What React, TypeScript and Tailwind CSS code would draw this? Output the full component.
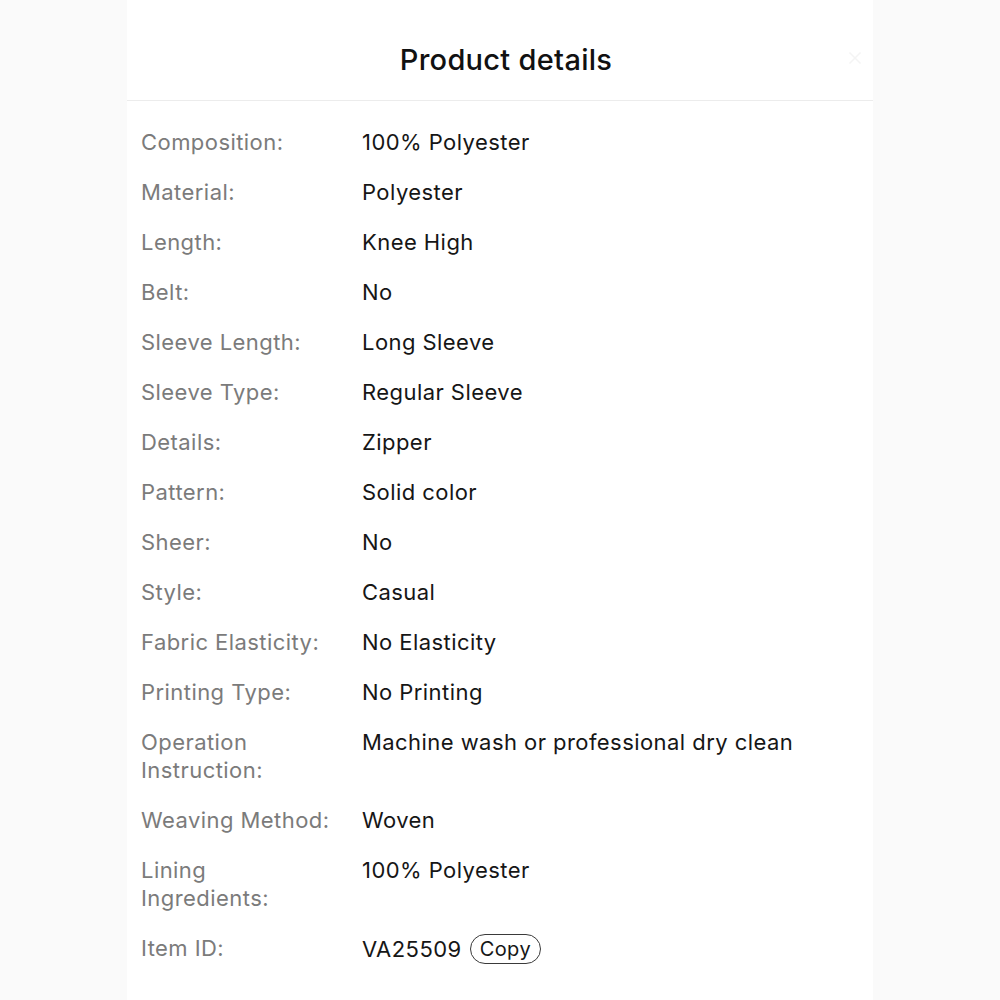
import { X } from "lucide-react"

interface DetailRow {
  label: string
  value: string
  copy?: boolean
}

const rows: DetailRow[] = [
  { label: "Composition:", value: "100% Polyester" },
  { label: "Material:", value: "Polyester" },
  { label: "Length:", value: "Knee High" },
  { label: "Belt:", value: "No" },
  { label: "Sleeve Length:", value: "Long Sleeve" },
  { label: "Sleeve Type:", value: "Regular Sleeve" },
  { label: "Details:", value: "Zipper" },
  { label: "Pattern:", value: "Solid color" },
  { label: "Sheer:", value: "No" },
  { label: "Style:", value: "Casual" },
  { label: "Fabric Elasticity:", value: "No Elasticity" },
  { label: "Printing Type:", value: "No Printing" },
  { label: "Operation\nInstruction:", value: "Machine wash or professional dry clean" },
  { label: "Weaving Method:", value: "Woven" },
  { label: "Lining\nIngredients:", value: "100% Polyester" },
  { label: "Item ID:", value: "VA25509", copy: true },
]

export default function App() {
  return (
    <div
      className="min-h-screen bg-[#fafafa] flex justify-center"
      style={{ fontFamily: "Inter, 'Noto Sans', sans-serif" }}
    >
      <div className="w-[746px] min-h-screen bg-white">
        <div className="relative pt-[40px] pb-[20px] border-b border-[#ececec] text-center">
          <h1 className="text-[29px] leading-[40px] font-medium tracking-[0.01em] text-[#111] pl-[12px]">
            Product details
          </h1>
          <X className="absolute right-[8px] top-[48px] h-5 w-5 text-[#f4f4f4]" strokeWidth={2} />
        </div>

        <div className="flex flex-col gap-[22px] pt-[27px] px-[14px] pb-8">
          {rows.map((r) => (
            <div key={r.label} className="flex items-start text-[22px] leading-[28px] tracking-[0.02em]">
              <div className="w-[221px] shrink-0 whitespace-pre-line text-[#7b7b7b]">
                {r.label}
              </div>
              <div className="flex items-center text-[#161616]">
                <span>{r.value}</span>
                {r.copy && (
                  <button
                    type="button"
                    className="ml-[8px] h-[30px] px-[9px] rounded-full border-[1.5px] border-[#3a3a3a] text-[20px] leading-[26px] text-[#161616]"
                  >
                    Copy
                  </button>
                )}
              </div>
            </div>
          ))}
        </div>
      </div>
    </div>
  )
}
